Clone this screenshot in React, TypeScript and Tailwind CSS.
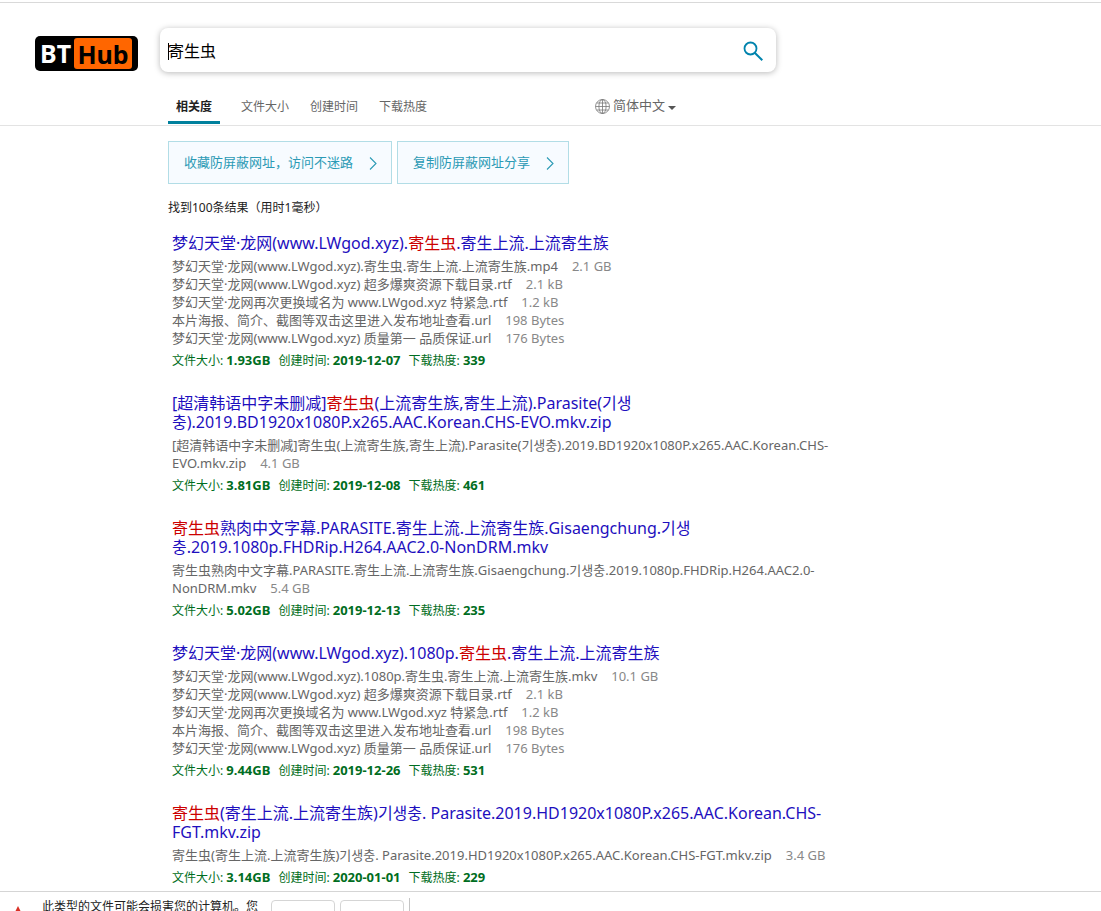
import { Fragment, useState } from 'react';

const KEYWORD = '寄生虫';

const tabs = ['相关度', '文件大小', '创建时间', '下载热度'];

const notices = ['收藏防屏蔽网址，访问不迷路', '复制防屏蔽网址分享'];

const results = [
  {
    title: '梦幻天堂·龙网(www.LWgod.xyz).寄生虫.寄生上流.上流寄生族',
    files: [
      { name: '梦幻天堂·龙网(www.LWgod.xyz).寄生虫.寄生上流.上流寄生族.mp4', size: '2.1 GB' },
      { name: '梦幻天堂·龙网(www.LWgod.xyz) 超多爆爽资源下载目录.rtf', size: '2.1 kB' },
      { name: '梦幻天堂·龙网再次更换域名为 www.LWgod.xyz 特紧急.rtf', size: '1.2 kB' },
      { name: '本片海报、简介、截图等双击这里进入发布地址查看.url', size: '198 Bytes' },
      { name: '梦幻天堂·龙网(www.LWgod.xyz) 质量第一 品质保证.url', size: '176 Bytes' }
    ],
    size: '1.93GB',
    date: '2019-12-07',
    hot: '339'
  },
  {
    title: '[超清韩语中字未删减]寄生虫(上流寄生族,寄生上流).Parasite(기생충).2019.BD1920x1080P.x265.AAC.Korean.CHS-EVO.mkv.zip',
    files: [
      {
        name: '[超清韩语中字未删减]寄生虫(上流寄生族,寄生上流).Parasite(기생충).2019.BD1920x1080P.x265.AAC.Korean.CHS-EVO.mkv.zip',
        size: '4.1 GB'
      }
    ],
    size: '3.81GB',
    date: '2019-12-08',
    hot: '461'
  },
  {
    title: '寄生虫熟肉中文字幕.PARASITE.寄生上流.上流寄生族.Gisaengchung.기생충.2019.1080p.FHDRip.H264.AAC2.0-NonDRM.mkv',
    files: [
      {
        name: '寄生虫熟肉中文字幕.PARASITE.寄生上流.上流寄生族.Gisaengchung.기생충.2019.1080p.FHDRip.H264.AAC2.0-NonDRM.mkv',
        size: '5.4 GB'
      }
    ],
    size: '5.02GB',
    date: '2019-12-13',
    hot: '235'
  },
  {
    title: '梦幻天堂·龙网(www.LWgod.xyz).1080p.寄生虫.寄生上流.上流寄生族',
    files: [
      { name: '梦幻天堂·龙网(www.LWgod.xyz).1080p.寄生虫.寄生上流.上流寄生族.mkv', size: '10.1 GB' },
      { name: '梦幻天堂·龙网(www.LWgod.xyz) 超多爆爽资源下载目录.rtf', size: '2.1 kB' },
      { name: '梦幻天堂·龙网再次更换域名为 www.LWgod.xyz 特紧急.rtf', size: '1.2 kB' },
      { name: '本片海报、简介、截图等双击这里进入发布地址查看.url', size: '198 Bytes' },
      { name: '梦幻天堂·龙网(www.LWgod.xyz) 质量第一 品质保证.url', size: '176 Bytes' }
    ],
    size: '9.44GB',
    date: '2019-12-26',
    hot: '531'
  },
  {
    title: '寄生虫(寄生上流.上流寄生族)기생충. Parasite.2019.HD1920x1080P.x265.AAC.Korean.CHS-FGT.mkv.zip',
    files: [
      {
        name: '寄生虫(寄生上流.上流寄生族)기생충. Parasite.2019.HD1920x1080P.x265.AAC.Korean.CHS-FGT.mkv.zip',
        size: '3.4 GB'
      }
    ],
    size: '3.14GB',
    date: '2020-01-01',
    hot: '229'
  }
];

function Logo() {
  return (
    <a
      href="#"
      aria-label="BT Hub"
      className="mb-px flex h-[35px] w-[103px] shrink-0 items-center rounded-[5px] bg-black pl-[5px] text-[25px] font-bold leading-[31px]"
    >
      <span className="w-[34px] text-white">BT</span>
      <span className="flex h-[31px] w-[58px] items-center justify-center rounded-[3px] bg-[#ff6600] pt-0.5 text-black">Hub</span>
    </a>
  );
}

// Marks the searched keyword in red
function Highlight({ text }: { text: string }) {
  const parts = text.split(KEYWORD);
  return (
    <>
      {parts.map((part, i) => (
        <Fragment key={i}>
          {i > 0 && <em className="not-italic text-[#cc0000]">{KEYWORD}</em>}
          {part}
        </Fragment>
      ))}
    </>
  );
}

function SearchBox() {
  const [query, setQuery] = useState(KEYWORD);

  return (
    <form
      onSubmit={(e) => e.preventDefault()}
      className="flex h-11 max-w-[616px] flex-1 items-center rounded-lg bg-white pl-2 pr-3 pt-0.5 shadow-[0_1px_6px_rgba(0,0,0,0.28)]"
    >
      <span className="-mr-px h-[17px] w-px bg-black" />
      <input
        type="text"
        aria-label="搜索"
        value={query}
        onChange={(e) => setQuery(e.target.value)}
        className="min-w-0 flex-1 bg-transparent text-base leading-6 text-black outline-none"
      />
      <button type="submit" aria-label="搜索" className="text-[#0083ad]">
        <svg className="h-[22px] w-[22px]" viewBox="0 0 22 22" fill="none" stroke="currentColor">
          <circle cx="8.5" cy="8.5" r="6" strokeWidth="1.8" />
          <path d="M12.7 12.7L20.3 20.3" strokeWidth="2" />
        </svg>
      </button>
    </form>
  );
}

function Globe() {
  return (
    <svg className="h-[15px] w-[15px]" viewBox="0 0 15 15" fill="none" stroke="#777" strokeWidth="0.8">
      <circle cx="7.5" cy="7.5" r="7" />
      <ellipse cx="7.5" cy="7.5" rx="3.6" ry="7" />
      <path d="M7.5 .5v14M.5 7.5h14M1.6 4h11.8M1.6 11h11.8" />
    </svg>
  );
}

export default function App() {
  const [active, setActive] = useState(0);

  return (
    <div
      lang="zh-CN"
      className="flex h-screen flex-col overflow-hidden bg-white pt-0.5 font-['Noto_Sans','Noto_Sans_CJK_SC','Noto_Sans_CJK_KR',sans-serif]"
    >
      <header className="shrink-0 border-y border-t-[#d9d9d9] border-b-[#e3e3e3]">
        <div className="flex items-end gap-[22px] pl-[35px] pr-4 pt-[25px]">
          <Logo />
          <SearchBox />
        </div>

        <nav className="mt-4 flex h-[37px] items-stretch pl-[168px] text-xs">
          {tabs.map((tab, i) => (
            <button
              key={tab}
              type="button"
              onClick={() => setActive(i)}
              className={`mb-px border-b-[3px] px-2 pt-1 ${
                active === i
                  ? 'mr-[13px] border-[#00809d] font-bold text-[#222]'
                  : 'mr-[5px] border-transparent text-[#666]'
              }`}
            >
              {tab}
            </button>
          ))}
          <button type="button" className="mb-px ml-[155px] flex items-center gap-[3px] text-[13px] text-[#666]">
            <Globe />
            简体中文
            <svg className="mt-1 h-1 w-2" viewBox="0 0 8 4" fill="#555">
              <path d="M0 0h8L4 4z" />
            </svg>
          </button>
        </nav>
      </header>

      <main className="min-h-0 flex-1 overflow-hidden pl-[168px] pr-4 pt-[15px]">
        <div className="flex gap-[5px]">
          {notices.map((notice) => (
            <a
              key={notice}
              href="#"
              className="flex h-[43px] items-center gap-4 border border-[#b2dde6] bg-[#f7fbff] pl-[15px] pr-[14px] text-[13px] text-[#2b9ab5]"
            >
              {notice}
              <svg className="mt-0.5 h-[13px] w-2" viewBox="0 0 8 13" fill="none" stroke="currentColor" strokeWidth="1.1">
                <path d="M1 .5l6 6-6 6" />
              </svg>
            </a>
          ))}
        </div>

        <p className="mt-[15px] text-xs leading-[18px] text-[#222]">找到100条结果（用时1毫秒）</p>

        <div className="mt-[17px] max-w-[676px] pl-1">
          {results.map((item) => (
            <article key={item.title} className="mb-[25px]">
              <h3 className="text-base leading-[19px]">
                <a href="#" className="text-[#1e0fbe]">
                  <Highlight text={item.title} />
                </a>
              </h3>
              <ul className="mt-1 text-[13px] leading-[18px] text-[#666]">
                {item.files.map((file) => (
                  <li key={file.name}>
                    {file.name}
                    <span className="ml-[14px] whitespace-nowrap text-[#888]">{file.size}</span>
                  </li>
                ))}
              </ul>
              <p className="mt-1 flex h-[18px] gap-2 text-xs leading-[18px] text-[#006d21]">
                <span>文件大小: <b className="text-[13px]">{item.size}</b></span>
                <span>创建时间: <b className="text-[13px]">{item.date}</b></span>
                <span>下载热度: <b className="text-[13px]">{item.hot}</b></span>
              </p>
            </article>
          ))}
        </div>
      </main>

      {/* Download warning bar */}
      <footer className="flex h-5 shrink-0 items-start overflow-hidden border-t border-[#d5d5d5] bg-white pl-3 text-xs text-[#222]">
        <svg className="mt-[14px] h-3 w-3 shrink-0" viewBox="0 0 12 12" fill="#d93025">
          <path d="M6 0l6 12H0z" />
        </svg>
        <p className="ml-[18px] mt-1.5 w-[217px] shrink-0 leading-[18px]">此类型的文件可能会损害您的计算机。您</p>
        <button type="button" aria-label="保留" className="ml-3 mt-2 h-7 w-16 shrink-0 rounded border border-[#d5d5d5]" />
        <button type="button" aria-label="放弃" className="ml-[5px] mt-2 h-7 w-16 shrink-0 rounded border border-[#d5d5d5]" />
        <span className="ml-[5px] mt-1.5 h-7 w-px shrink-0 bg-[#c4c4c4]" />
      </footer>
    </div>
  );
}
